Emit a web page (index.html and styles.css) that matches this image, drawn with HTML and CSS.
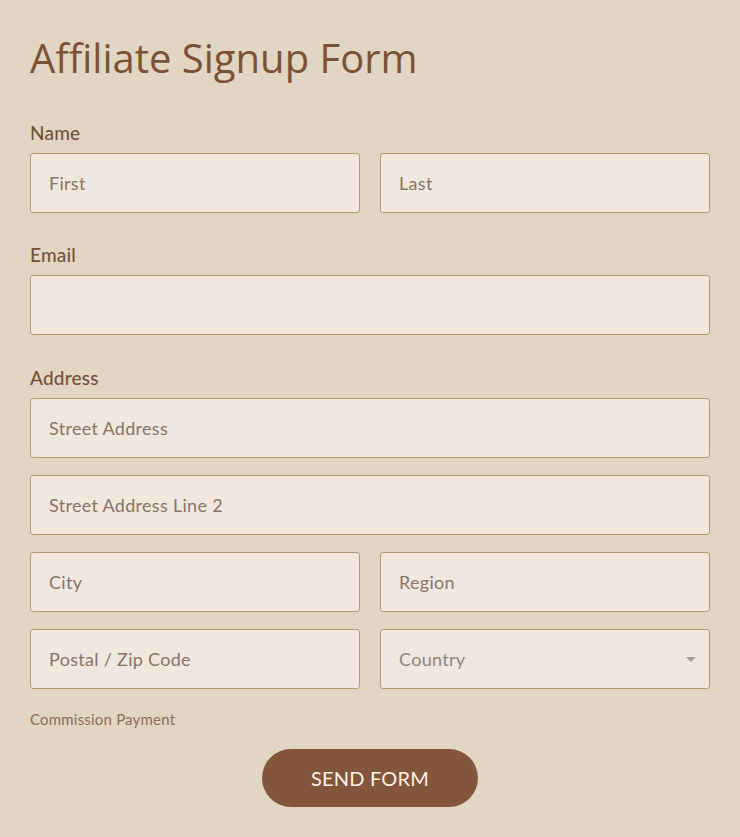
FILE: index.html
```html
<!DOCTYPE html>
<html lang="en">
<head>
<meta charset="utf-8">
<title>Affiliate Signup Form</title>
<link rel="stylesheet" href="styles.css">
</head>
<body>
<form class="form">
  <h1 class="title">Affiliate Signup Form</h1>

  <div class="field field-name">
    <label class="label">Name</label>
    <div class="row">
      <input class="input" type="text" placeholder="First">
      <input class="input" type="text" placeholder="Last">
    </div>
  </div>

  <div class="field">
    <label class="label">Email</label>
    <input class="input" type="email">
  </div>

  <div class="field">
    <label class="label">Address</label>
    <div class="stack">
      <input class="input" type="text" placeholder="Street Address">
      <input class="input" type="text" placeholder="Street Address Line 2">
      <div class="row">
        <input class="input" type="text" placeholder="City">
        <input class="input" type="text" placeholder="Region">
      </div>
      <div class="row">
        <input class="input" type="text" placeholder="Postal / Zip Code">
        <div class="select">
          <span class="select-text">Country</span>
          <span class="caret"></span>
        </div>
      </div>
    </div>
  </div>

  <div class="note">Commission Payment</div>

  <div class="actions">
    <button class="btn" type="button">SEND FORM</button>
  </div>
</form>
</body>
</html>
```

FILE: styles.css
```css
* { box-sizing: border-box; }

html, body {
  margin: 0;
  padding: 0;
  background: #e1d6c4;
}

body {
  font-family: Lato, "Noto Sans", sans-serif;
  color: #7b5236;
}

.form {
  padding: 32px 30px 30px;
  display: flex;
  flex-direction: column;
}

.title {
  font-family: "Open Sans", sans-serif;
  font-weight: 400;
  font-size: 40px;
  line-height: 52px;
  margin: 0 0 38px;
  color: #7b5236;
}

.field {
  display: flex;
  flex-direction: column;
  gap: 9px;
  margin-bottom: 32px;
}

.field-name {
  margin-bottom: 31px;
}

.label {
  font-size: 19px;
  font-weight: 500;
  line-height: 22px;
  color: #765238;
  letter-spacing: 0.2px;
}

.row {
  display: grid;
  grid-template-columns: 1fr 1fr;
  gap: 20px;
}

.stack {
  display: flex;
  flex-direction: column;
  gap: 17px;
}

.input, .select {
  height: 60px;
  width: 100%;
  background: #f0e8df;
  border: 1px solid #b39c70;
  border-radius: 3px;
  padding: 0 18px;
  font-family: Lato, "Noto Sans", sans-serif;
  font-size: 18px;
  letter-spacing: 0.3px;
  color: #7b5236;
  outline: none;
}

.input::placeholder {
  color: #8c7364;
  opacity: 1;
}

.select {
  display: flex;
  align-items: center;
  justify-content: space-between;
}

.select-text {
  color: #8f8680;
}

.caret {
  width: 0;
  height: 0;
  border-left: 5px solid transparent;
  border-right: 5px solid transparent;
  border-top: 5px solid #a59a92;
  margin-right: -5px;
}

.note {
  font-size: 15px;
  color: #8a6d58;
  margin-top: -11px;
  line-height: 18px;
  letter-spacing: 0.2px;
}

.actions {
  display: flex;
  justify-content: center;
  margin-top: 21px;
}

.btn {
  width: 216px;
  height: 58px;
  border: none;
  border-radius: 29px;
  background: #83553a;
  color: #fbf2e8;
  font-family: Lato, "Noto Sans", sans-serif;
  font-size: 20px;
  letter-spacing: 0.2px;
}
```
